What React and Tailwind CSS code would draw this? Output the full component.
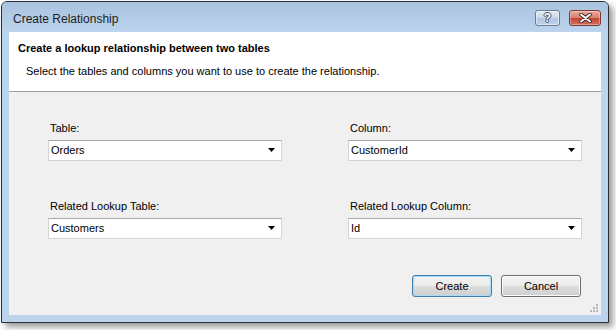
import React from "react";

function Combo({ value }) {
  return (
    <div className="flex h-[21px] w-[234px] items-center justify-between border border-[#d4d4d4] border-t-[#a9a9a9] bg-white pl-[2px] pr-[4px]">
      <span className="text-[11px] text-black">{value}</span>
      <svg width="8" height="5" viewBox="0 0 8 5" className="mr-[1px]">
        <path d="M0 0h7L3.5 4z" fill="#000" />
      </svg>
    </div>
  );
}

function Field({ label, value }) {
  return (
    <div className="flex w-[234px] flex-col">
      <span className="mb-[5px] pl-[2px] text-[11px] leading-[13px] text-black">{label}</span>
      <Combo value={value} />
    </div>
  );
}

function Button({ children, focused }) {
  return (
    <button
      className={
        "h-[22px] w-[80px] rounded-[3px] border bg-[linear-gradient(#f3f3f3_0%,#ebebeb_50%,#dddddd_51%,#cfcfcf_100%)] text-[11px] text-black " +
        (focused ? "border-[#3c7fb1] shadow-[inset_0_0_0_1px_#a6dcf7]" : "border-[#707070] shadow-[inset_0_0_0_1px_#fcfcfc]")
      }
    >
      {children}
    </button>
  );
}

export default function App() {
  return (
    <div
      className="h-[330px] w-[616px] bg-white pl-[1px] pt-[1px]"
      style={{ fontFamily: '"Liberation Sans", Arial, sans-serif' }}
    >
      <div className="flex h-[322px] w-[608px] flex-col rounded-t-[6px] border border-[#2a2f36] bg-[#bcd4ed] shadow-[4px_4px_6px_rgba(0,0,0,0.4)]">
        {/* title bar */}
        <div className="flex h-[30px] items-center justify-between rounded-t-[5px] bg-gradient-to-b from-[#a9c2de] to-[#bcd4ed] pl-[11px] pr-[7px]">
          <span className="pt-[4px] text-[12px] text-[#1e1e1e]">Create Relationship</span>
          <div className="flex items-center gap-[9px] pt-[2px]">
            <div className="flex h-[16px] w-[25px] items-center justify-center rounded-[3px] border border-[#6b7c93] bg-[linear-gradient(#e2ebf5_0%,#c8d8ea_50%,#b1c7e0_51%,#bfd3ea_100%)] shadow-[inset_0_0_0_1px_rgba(255,255,255,0.5)]">
              <span className="text-[12px] font-bold leading-none text-white [text-shadow:1px_0_0_#3e4d63,-1px_0_0_#3e4d63,0_1px_0_#3e4d63,0_-1px_0_#3e4d63]">?</span>
            </div>
            <div className="flex h-[16px] w-[32px] items-center justify-center rounded-[3px] border border-[#7a3a33] bg-[linear-gradient(#eaa899_0%,#d77f70_50%,#c3452f_51%,#d27060_100%)] shadow-[inset_0_0_0_1px_rgba(255,255,255,0.35)]">
              <svg width="13" height="10" viewBox="0 0 13 10">
                <path d="M2 1.5l9 7M11 1.5l-9 7" stroke="#3d1d1a" strokeWidth="3.6" strokeLinecap="round" />
                <path d="M2 1.5l9 7M11 1.5l-9 7" stroke="#fff" strokeWidth="2" strokeLinecap="round" />
              </svg>
            </div>
          </div>
        </div>

        {/* client area */}
        <div className="flex flex-1 flex-col px-[7px] pb-[7px]">
          <div className="flex h-[59px] flex-col bg-white pl-[9px] pt-[9px]">
            <span className="text-[11px] font-bold leading-[14px] text-black">
              Create a lookup relationship between two tables
            </span>
            <span className="mt-[9px] pl-[8px] text-[11px] leading-[14px] text-black">
              Select the tables and columns you want to use to create the relationship.
            </span>
          </div>
          <div className="h-px bg-[#a0a0a0]" />
          <div className="relative flex flex-1 flex-col bg-[#f0f0f0] pl-[39px] pt-[30px]">
            <div className="flex gap-[66px]">
              <Field label="Table:" value="Orders" />
              <Field label="Column:" value="CustomerId" />
            </div>
            <div className="mt-[39px] flex gap-[66px]">
              <Field label="Related Lookup Table:" value="Customers" />
              <Field label="Related Lookup Column:" value="Id" />
            </div>
            <div className="mt-[36px] flex justify-end gap-[9px] pr-[20px]">
              <Button focused>Create</Button>
              <Button>Cancel</Button>
            </div>
            <svg width="10" height="10" viewBox="0 0 10 10" className="absolute bottom-[2px] right-[2px]">
              <g fill="#b5b5b5">
                <rect x="7" y="1" width="2" height="2" />
                <rect x="4" y="4" width="2" height="2" />
                <rect x="7" y="4" width="2" height="2" />
                <rect x="1" y="7" width="2" height="2" />
                <rect x="4" y="7" width="2" height="2" />
                <rect x="7" y="7" width="2" height="2" />
              </g>
            </svg>
          </div>
        </div>
      </div>
    </div>
  );
}
